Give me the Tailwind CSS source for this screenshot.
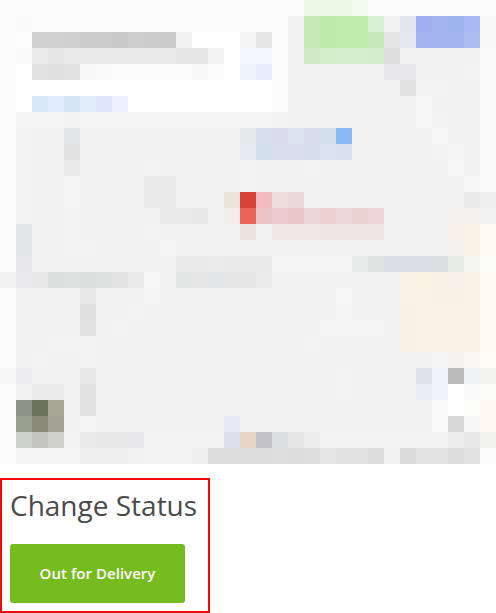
<!DOCTYPE html>
<html lang="en">
<head>
<meta charset="utf-8">
<title>Change Status</title>
<script src="https://cdn.jsdelivr.net/npm/@tailwindcss/browser@4"></script>
</head>
<body class="bg-white w-[496px] h-[613px] overflow-hidden font-['Open_Sans','Noto_Sans',sans-serif]">
<main class="flex flex-col items-start">
  <svg id="map" class="block w-[496px] h-[464px] mb-[14px]" viewBox="0 0 31 29" shape-rendering="crispEdges" role="img" aria-label="Pixelated map"></svg>
  <section class="w-[210px] h-[135px] border-2 border-[#f00a0a] pl-2 pt-1.5">
    <h1 class="text-[28px] leading-[38px] text-[#4a4a4a] whitespace-nowrap">Change Status</h1>
    <button class="block mt-5 w-[175px] h-[59px] rounded-[3px] bg-[#77bc1f] text-white text-[15px] tracking-[0.03px] font-semibold whitespace-nowrap">Out for Delivery</button>
  </section>
</main>
<script>
// One string per mosaic row: "column:colour,colour,..." with "*n" for repeats.
const rows = [
"0:fcfcfc*19,eafae6*3,f0fbee,fcfcfc*8",
"0:fcfcfc,f9f9f9,fbfbfb*16,f1f1f1,c5ecb8,bdecaa,beecad*2,d8f0d3,f2f2f2,e2e7ed,a1aef0,a3b5f1,a0b3f1,a9b9f3,f8f8f8",
"0:fbfbfb,fdfdfd,d2d2d2*2,d0d0d0,cccccc,cdcdcd,c9c9c9,cecece,cccccc,cacaca,f2f2f2,ffffff*3,f5f5f5,e6e6e6,fcfcfc,f1f1f1,c5ecb8,bdecaa,beecad*2,c4ebb9,e5e5e5,e4e7f0,a3b4f1,a3b5f1,a2b4f1,acbdf1,f8f8f8",
"1:fafafa,ececec,e6e6e6,e9e9e9*7,e6e6e6*2,f4f4f4,ffffff,f4f8fd,f2f6ff,fcfcfc,f1f1f1,d2ebc6,d3efca,d5eecb*2,d3ecca,dedee1,f2f2f2*5",
"1:ffffff,e2e2e2,e0e0e0,e2e2e2,f8f8f8,fafafa,fcfcfc*5,f8f8f8,fcfcfc,ffffff,edf4fe,e8edfd,fcfcfc|24:e7e7e9*2|29:f4f4f4",
"1:ffffff*16,fcfcfc|25:e1e1e2,f4f4f4*2",
"1:ffffff,d7e7f8,e1edfc,d5e5f5,e2edfc,dde6fb,edf0fe,ffffff*9,fcfcfc|26:f6f6f6",
"1:f5f5f5*3,f3f3f3,f5f5f5*12,f4f4f4|26:f6f6f6,f3f3f3",
"1:f4f4f4|4:e2e5e5|15:e6e8ea,d6dfeb,d8dde9,dce4ee,d6dde9,d4deea,8abaf5|27:f6f6f6",
"1:f4f4f4|4:e2e2e2|15:e6eaef,d4dfec,d9dfea*2,d5dfeb,dae3ee,d7e1f0|27:f4f4f4,f5f5f5",
"1:f4f4f4|4:e9e9e9|9:f4f4f4|15:f4f4f4|19:f4f4f4|28:f7f7f7,f2f2f2",
"1:f4f4f4|4:f5f5f5|9:eaeaea*2|15:f4f4f4|29:f7f7f7",
"1:f4f4f4|4:f5f5f5|9:eaeaea*2|14:ebe3de,d94236,f2bac1,eddcd9,ecd9dd|29:eaeaea,eeeeee",
"1:f4f4f4|4:f4f4f4|10:e9e9e9*2,e8e8e8|14:f2eeed,ea6658,eac5c8,ebcacd,ebc7c9,edd6da,eed2d0,edd7da,ead2d0,eed5d8|28:f3f1ee*2,f2f2f2",
"1:e2e5e6|4:f4f4f4|9:f3f3f3|15:ece3df|17:f0e7e4,eee6e7*2,efe5e3,efe5e5*3|28:f4f1e8,faf2e6,fefbf3",
"1:e3e5e6|4:f3f3f3*2|10:f5f5f5|28:f3f1eb,faf2e6,fefbf3",
"1:e8e8eb|11:eaeaea*2,ebebeb,e9e9e9*2,eaeaea,f5f5f5*5,e9eaea,e0e3e2,dce0e2,dde0e3,dce0e2,dbdfe0,e8eae8,f5f5f4,fcfcfa",
"0:f2f2f2,e9e9ec,e8e8e8,dcdfde,dee1e0,dcdfde,dee1e0,e3e3e3,eaeaea,f7f7f7|11:e2e5e4,e6e6e6,e3e6e7,e6e6e6*2,ebebeb,f2f2f2*3|25:f8f3e4,fcf3e5,f5f1e6*2,f9f2e7,fffbf2",
"5:e7e7e8|9:f5f5f5|21:f6f6f6|25:f7f3e7,fcf3e6,f8f2e5,f7f2e6,faf3e7,fffbf2",
"5:e0e0e0|8:f4f4f4|21:f5f5f5|25:f6f1e4,fbf3e7*4,fffbf2",
"5:e2e2e2|7:f4f4f4|20:f5f5f5*4|25:f6f2e5,fbf3e7*4,fffbf2",
"3:f4f4f4*3|19:f4f4f4|25:f6f2e6,fbf3e7*4,fffbf2",
"2:f4f4f4|5:f4f4f4|27:f6f5f5,f4f3f2,f9f8f4,fffcf5",
"0:f7f7f7,ededf0|5:e7e7e7|21:f4f4f4|26:dfe2e7,f1f3f8,bababa,eff2f2,f4f4f0",
"2:ebebeb*2|5:e1e1e1|21:f4f4f4|26:ebeef1,f3f4f8,ffffff,f9f9f9,fbfbf9",
"1:8c9487,6b735c,a6a794|5:e2e2e3|27:fafafa,ffffff,fdfdfb,fffaef",
"1:9a9e8c,8a8a78,a0a192|5:f5f5f5|14:e8e8f6|27:fafafa,d8d8d8,f7f6f6,fffaef",
"1:cfd1cc,c5c6c2,cfd0ca,f4f4f4,e9e9e9,e8e8e8*2,e7e7e9,f4f4f4*5,dedfee,e8d7c6,c2c2c6,dedfe1,e6e6e6,ededed,f4f4f4*8,ededed,e7e7e7,f0f0ed",
"0:fcfcfc,f5f5f5*4,eeeeee*3,f0f0f0,f4f4f4*3,efefef,dcdcdc*3,dddddd,dedede,dcdcdc,dfdfdf,e6e6e6,e1e1e1,e2e2e2,dddddd,f0f0f0,dbdbdb,e3e3e3*2,dcdcdc,e1e1e1,fcfcfc"
];
const map = document.getElementById("map");
function cell(x, y, w, h, colour) {
  const r = document.createElementNS("http://www.w3.org/2000/svg", "rect");
  r.setAttribute("x", x); r.setAttribute("y", y);
  r.setAttribute("width", w); r.setAttribute("height", h);
  r.setAttribute("fill", colour);
  map.appendChild(r);
}
cell(0, 0, 31, 29, "#f1f1f1");
cell(0, 0, 1, 29, "#fbfbfb");
cell(30, 0, 1, 29, "#fafafa");
rows.forEach((row, y) => row.split("|").forEach(run => {
  let [x, list] = run.split(":");
  x = Number(x);
  list.split(",").forEach(item => {
    const [colour, n = "1"] = item.split("*");
    cell(x, y, Number(n), 1, "#" + colour);
    x += Number(n);
  });
}));
</script>
</body>
</html>
